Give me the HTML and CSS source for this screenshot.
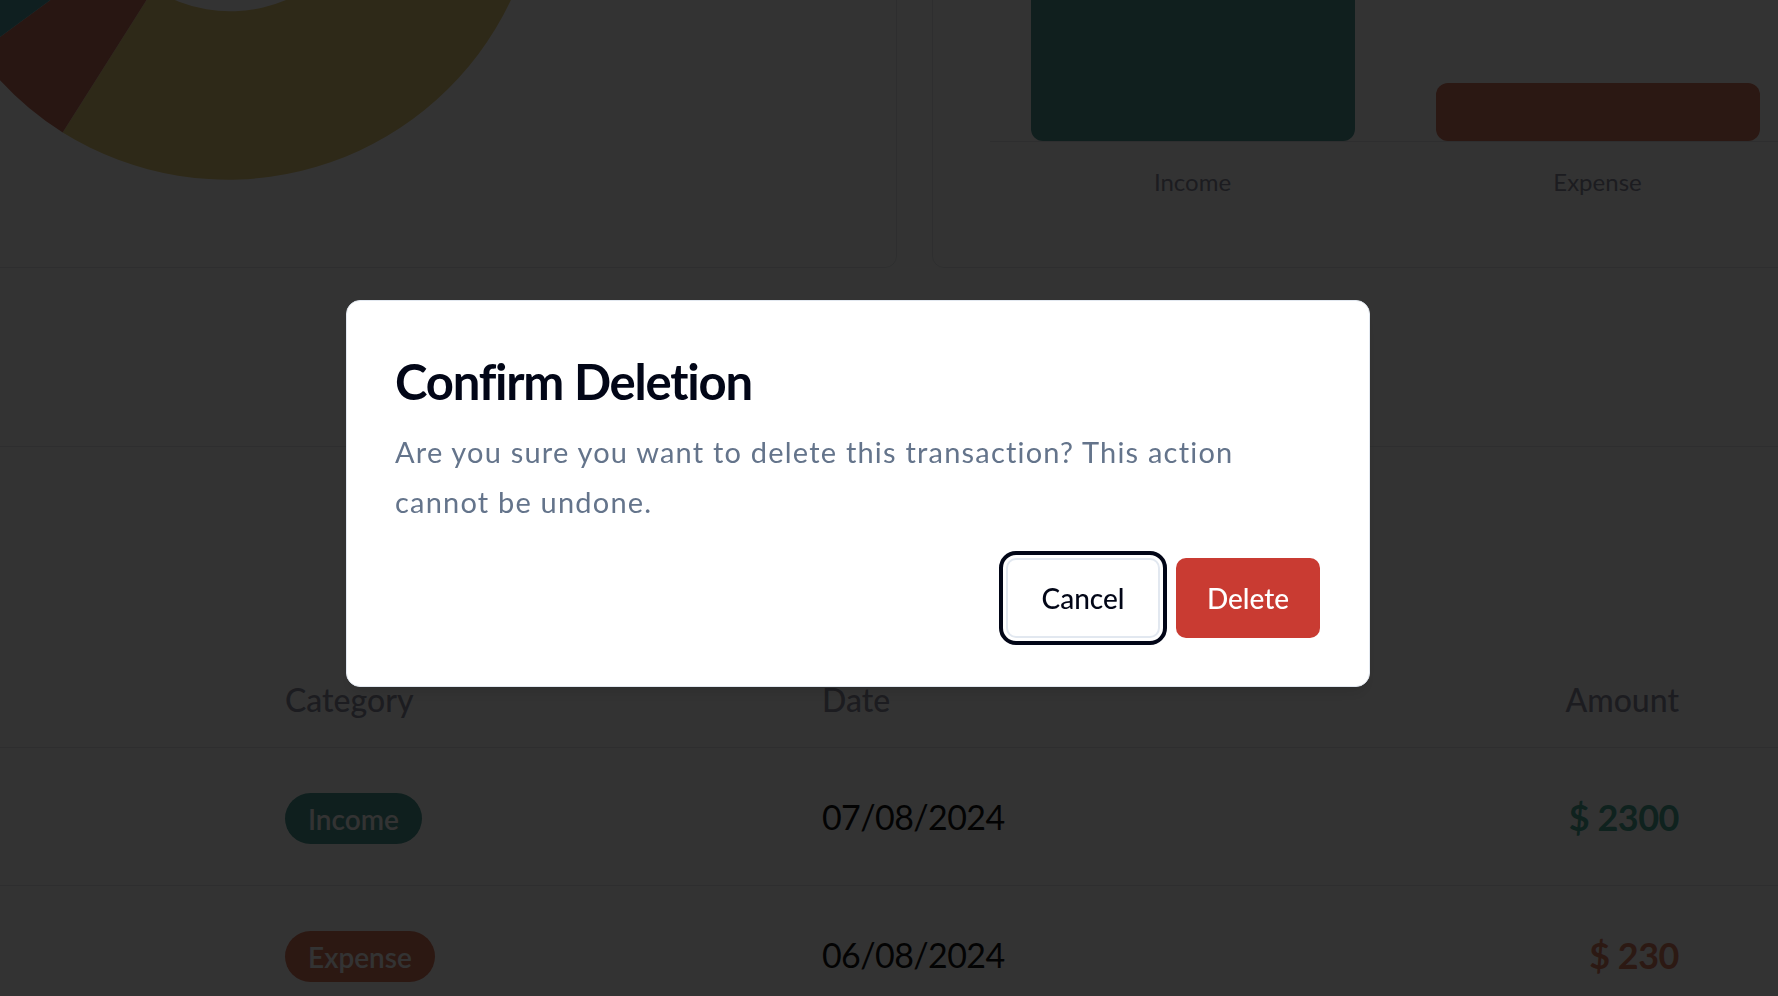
FILE: index.html
```html
<!DOCTYPE html>
<html lang="en">
<head>
<meta charset="utf-8">
<title>Transactions</title>
<link rel="stylesheet" href="styles.css">
</head>
<body>
<main class="page">
  <section class="charts">
    <div class="card pie-card">
      <svg class="pie" width="998" height="826" viewBox="0 0 998 826" aria-hidden="true">
        <path class="seg-yellow" d="M492.5,155.9 A313,313 0 1 1 168.7,691.6 L259.6,547.9 A143,143 0 1 0 407.5,303.2 Z"/>
        <path class="seg-red" d="M168.7,691.6 A313,313 0 0 1 83.8,612.3 L220.8,511.7 A143,143 0 0 0 259.6,547.9 Z"/>
        <path class="seg-teal" d="M83.8,612.3 A313,313 0 0 1 492.5,155.9 L407.5,303.2 A143,143 0 0 0 220.8,511.7 Z"/>
      </svg>
    </div>
    <div class="card bar-card">
      <div class="plot">
        <div class="band"><div class="bar bar-income" style="height:584px"></div></div>
        <div class="band"><div class="bar bar-expense" style="height:58px"></div></div>
      </div>
      <div class="axis-labels">
        <span>Income</span>
        <span>Expense</span>
      </div>
    </div>
  </section>

  <section class="transactions">
    <div class="tx-row tx-head">
      <span>Category</span>
      <span>Date</span>
      <span class="num">Amount</span>
    </div>
    <div class="tx-row">
      <span class="cell-badge"><span class="badge badge-income">Income</span></span>
      <span class="date">07/08/2024</span>
      <span class="num amount amount-income">$ 2300</span>
    </div>
    <div class="tx-row">
      <span class="cell-badge"><span class="badge badge-expense">Expense</span></span>
      <span class="date">06/08/2024</span>
      <span class="num amount amount-expense">$ 230</span>
    </div>
  </section>
</main>

<div class="overlay">
  <div class="dialog" role="alertdialog" aria-labelledby="dlg-title">
    <h2 id="dlg-title" class="dialog-title">Confirm Deletion</h2>
    <p class="dialog-text">Are you sure you want to delete this transaction? This action cannot be undone.</p>
    <div class="dialog-actions">
      <button class="btn btn-cancel" type="button">Cancel</button>
      <button class="btn btn-delete" type="button">Delete</button>
    </div>
  </div>
</div>
</body>
</html>
```
FILE: styles.css
```css
* { box-sizing: border-box; }

html, body {
  margin: 0;
  padding: 0;
  height: 100%;
  overflow: hidden;
}

body {
  background: #ffffff;
  font-family: "Lato", "Open Sans", sans-serif;
  color: #111111;
}

.page {
  width: 1778px;
}

/* ---------- charts row ---------- */
.charts {
  display: grid;
  grid-template-columns: 1004px 931px;
  column-gap: 35px;
  margin-left: -107px;
  margin-top: -560px;
}

.card {
  background: #ffffff;
  border: 1px solid #e5e7eb;
  border-radius: 12px;
  height: 828px;
  overflow: hidden;
}

.pie {
  display: block;
}

.seg-yellow { fill: #e6cc7a; }
.seg-red { fill: #c8705c; }
.seg-teal { fill: #4a9aa0; }

.bar-card {
  display: flex;
  flex-direction: column;
  justify-content: flex-end;
  padding: 0 0 70px 57px;
}

.plot {
  display: flex;
  align-items: flex-end;
  width: 810px;
  height: 700px;
  border-bottom: 1px solid #e5e7eb;
}

.band {
  width: 405px;
  display: flex;
  justify-content: center;
  align-items: flex-end;
}

.bar {
  width: 324px;
  border-radius: 12px;
}

.bar-income { background: #4f9b97; }
.bar-expense { background: #d6775e; }

.axis-labels {
  display: grid;
  grid-template-columns: 405px 405px;
  margin-top: 25px;
  font-size: 24px;
  line-height: 30px;
  color: #8e8ea0;
  text-align: center;
}

/* ---------- transactions ---------- */
.transactions {
  margin-top: 178px;
  border-top: 1px solid #e5e7eb;
  padding-top: 208px;
}

.tx-row {
  display: grid;
  grid-template-columns: 537px 1fr auto;
  align-items: center;
  padding: 0 99px 0 285px;
  height: 138px;
  border-bottom: 1px solid #e5e7eb;
}

.tx-head {
  height: 93px;
  align-items: end;
  padding-bottom: 27px;
  font-size: 32px;
  line-height: 40px;
  font-weight: 500;
  color: #8e8ea0;
}

.num { text-align: right; }

.cell-badge {
  display: flex;
}

.badge {
  display: inline-flex;
  align-items: center;
  height: 51px;
  margin-top: 4px;
  padding: 0 23px;
  border-radius: 999px;
  font-size: 28px;
  font-weight: 600;
  color: #ffffff;
}

.badge-income { background: #4a9a94; }
.badge-expense { background: #d9775d; }

.date {
  font-size: 34px;
  letter-spacing: -0.6px;
  color: #111111;
}

.amount {
  font-size: 36px;
  font-weight: 700;
  letter-spacing: -0.5px;
}

.amount-income { color: #4aa898; }
.amount-expense { color: #dc7c5f; }

/* ---------- dialog ---------- */
.overlay {
  position: fixed;
  inset: 0;
  background: rgba(0, 0, 0, 0.8);
  display: flex;
  align-items: center;
  justify-content: center;
  padding: 0 62px 9px 0;
}

.dialog {
  width: 1024px;
  background: #ffffff;
  border: 1px solid #e2e8f0;
  border-radius: 14px;
  padding: 48px;
  box-shadow: 0 10px 15px -3px rgba(0, 0, 0, 0.1), 0 4px 6px -4px rgba(0, 0, 0, 0.1);
}

.dialog-title {
  margin: 0;
  font-size: 49px;
  line-height: 64px;
  font-weight: 700;
  letter-spacing: -1.2px;
  color: #020617;
}

.dialog-text {
  margin: 14px 0 0;
  max-width: 880px;
  font-size: 29px;
  line-height: 50px;
  letter-spacing: 1.2px;
  color: #64748b;
}

.dialog-actions {
  display: flex;
  justify-content: flex-end;
  gap: 16px;
  margin-top: 31px;
  margin-right: 1px;
}

.btn {
  display: inline-flex;
  align-items: center;
  justify-content: center;
  height: 80px;
  border-radius: 10px;
  font-family: inherit;
  font-size: 28px;
  font-weight: 500;
  cursor: pointer;
}

.btn-cancel {
  width: 154px;
  background: #ffffff;
  border: 2px solid #e2e8f0;
  color: #020617;
  outline: 4px solid #020617;
  outline-offset: 3px;
}

.btn-delete {
  width: 144px;
  background: #c93b32;
  border: none;
  color: #ffffff;
}
```
